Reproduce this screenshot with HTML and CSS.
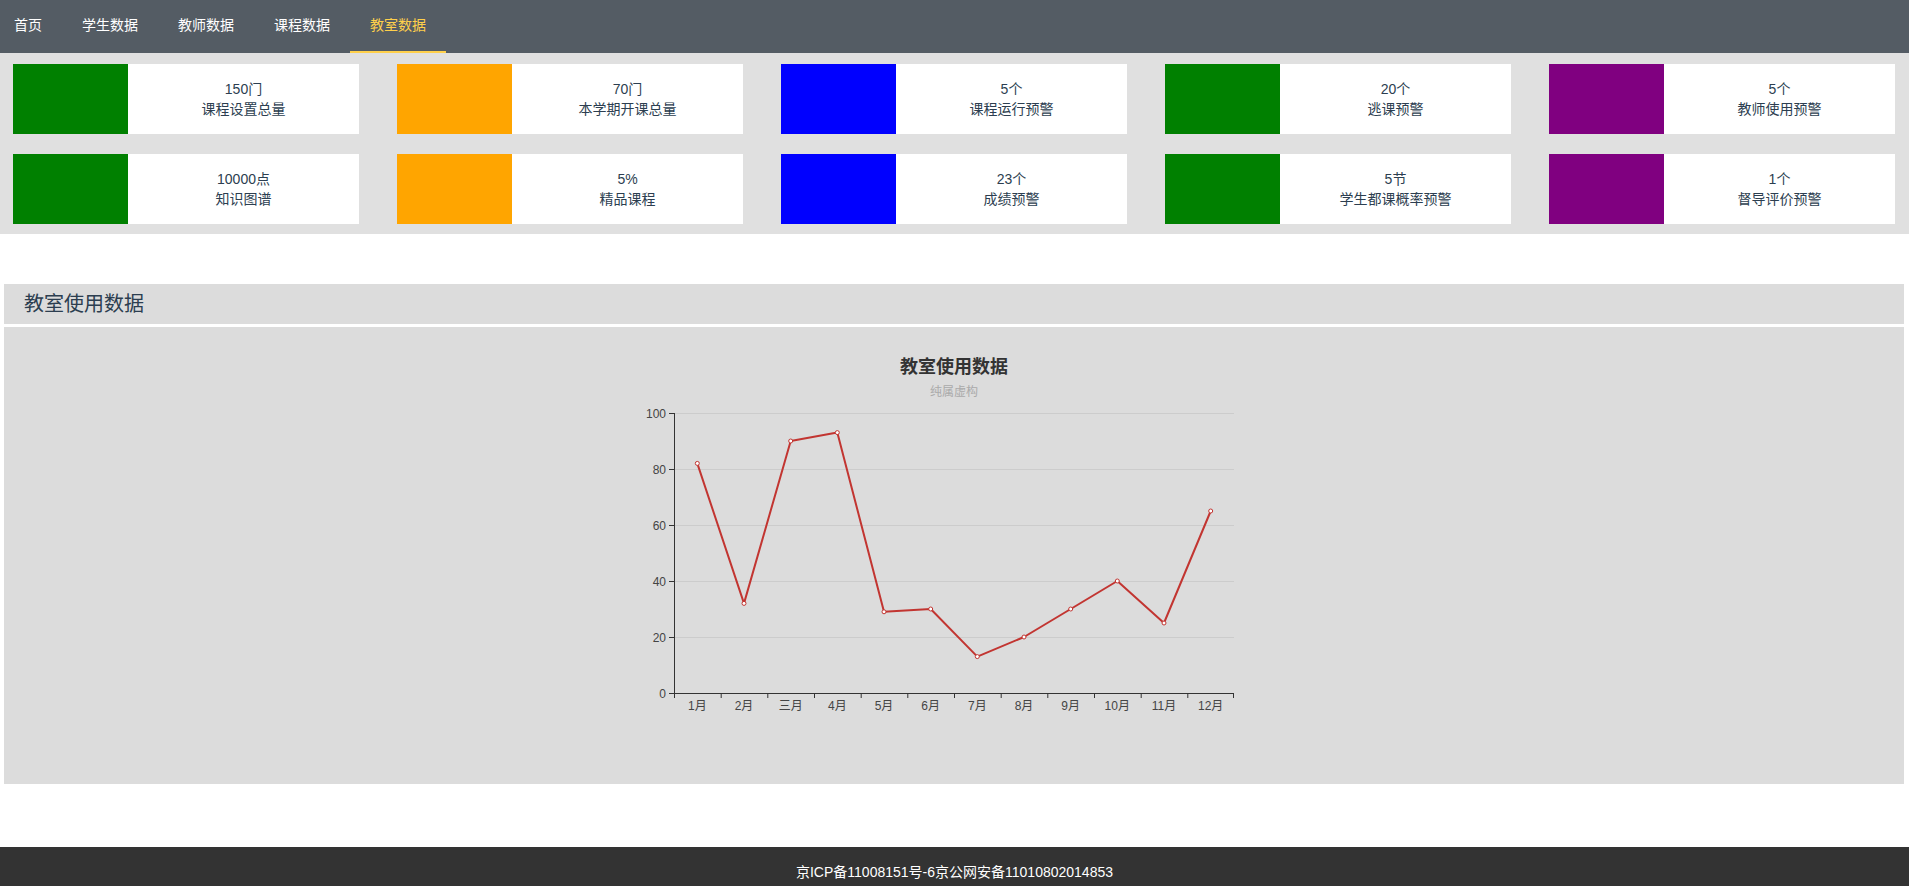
FILE: index.html
```html
<!DOCTYPE html>
<html lang="zh">
<head>
<meta charset="utf-8">
<title>教室数据</title>
<link rel="stylesheet" href="styles.css">
</head>
<body>
<nav class="nav">
  <ul class="nav-list">
    <li class="nav-item">首页</li>
    <li class="nav-item">学生数据</li>
    <li class="nav-item">教师数据</li>
    <li class="nav-item">课程数据</li>
    <li class="nav-item active">教室数据</li>
  </ul>
</nav>

<section class="stats">
  <div class="card"><div class="swatch green"></div><div class="card-text"><span>150门</span><span>课程设置总量</span></div></div>
  <div class="card"><div class="swatch orange"></div><div class="card-text"><span>70门</span><span>本学期开课总量</span></div></div>
  <div class="card"><div class="swatch blue"></div><div class="card-text"><span>5个</span><span>课程运行预警</span></div></div>
  <div class="card"><div class="swatch green"></div><div class="card-text"><span>20个</span><span>逃课预警</span></div></div>
  <div class="card"><div class="swatch purple"></div><div class="card-text"><span>5个</span><span>教师使用预警</span></div></div>
  <div class="card"><div class="swatch green"></div><div class="card-text"><span>10000点</span><span>知识图谱</span></div></div>
  <div class="card"><div class="swatch orange"></div><div class="card-text"><span>5%</span><span>精品课程</span></div></div>
  <div class="card"><div class="swatch blue"></div><div class="card-text"><span>23个</span><span>成绩预警</span></div></div>
  <div class="card"><div class="swatch green"></div><div class="card-text"><span>5节</span><span>学生都课概率预警</span></div></div>
  <div class="card"><div class="swatch purple"></div><div class="card-text"><span>1个</span><span>督导评价预警</span></div></div>
</section>

<section class="panel">
  <h2 class="panel-title">教室使用数据</h2>
  <div class="chart-box">
    <svg class="chart" width="700" height="400" viewBox="0 0 700 400">
      <text class="c-title" x="350" y="13.5">教室使用数据</text>
      <text class="c-sub" x="350" y="38.5">纯属虚构</text>
      <g class="split">
        <line x1="70" y1="60.5" x2="630" y2="60.5"/>
        <line x1="70" y1="116.5" x2="630" y2="116.5"/>
        <line x1="70" y1="172.5" x2="630" y2="172.5"/>
        <line x1="70" y1="228.5" x2="630" y2="228.5"/>
        <line x1="70" y1="284.5" x2="630" y2="284.5"/>
      </g>
      <g class="axis">
        <line x1="70.5" y1="60" x2="70.5" y2="340.5"/>
        <line x1="70" y1="340.5" x2="630" y2="340.5"/>
        <line x1="65" y1="60.5" x2="70" y2="60.5"/>
        <line x1="65" y1="116.5" x2="70" y2="116.5"/>
        <line x1="65" y1="172.5" x2="70" y2="172.5"/>
        <line x1="65" y1="228.5" x2="70" y2="228.5"/>
        <line x1="65" y1="284.5" x2="70" y2="284.5"/>
        <line x1="65" y1="340.5" x2="70" y2="340.5"/>
        <line x1="70.5" y1="340" x2="70.5" y2="345"/>
        <line x1="117.2" y1="340" x2="117.2" y2="345"/>
        <line x1="163.8" y1="340" x2="163.8" y2="345"/>
        <line x1="210.5" y1="340" x2="210.5" y2="345"/>
        <line x1="257.2" y1="340" x2="257.2" y2="345"/>
        <line x1="303.8" y1="340" x2="303.8" y2="345"/>
        <line x1="350.5" y1="340" x2="350.5" y2="345"/>
        <line x1="397.2" y1="340" x2="397.2" y2="345"/>
        <line x1="443.8" y1="340" x2="443.8" y2="345"/>
        <line x1="490.5" y1="340" x2="490.5" y2="345"/>
        <line x1="537.2" y1="340" x2="537.2" y2="345"/>
        <line x1="583.8" y1="340" x2="583.8" y2="345"/>
        <line x1="629.5" y1="340" x2="629.5" y2="345"/>
      </g>
      <g class="ylab">
        <text x="62" y="60.5">100</text>
        <text x="62" y="116.5">80</text>
        <text x="62" y="172.5">60</text>
        <text x="62" y="228.5">40</text>
        <text x="62" y="284.5">20</text>
        <text x="62" y="340.5">0</text>
      </g>
      <g class="xlab">
        <text x="93.3" y="353">1月</text>
        <text x="140" y="353">2月</text>
        <text x="186.7" y="353">三月</text>
        <text x="233.3" y="353">4月</text>
        <text x="280" y="353">5月</text>
        <text x="326.7" y="353">6月</text>
        <text x="373.3" y="353">7月</text>
        <text x="420" y="353">8月</text>
        <text x="466.7" y="353">9月</text>
        <text x="513.3" y="353">10月</text>
        <text x="560" y="353">11月</text>
        <text x="606.7" y="353">12月</text>
      </g>
      <polyline class="series" points="93.3,110.4 140,250.4 186.7,88 233.3,79.6 280,258.8 326.7,256 373.3,303.6 420,284 466.7,256 513.3,228 560,270 606.7,158"/>
      <g class="dots">
        <circle cx="93.3" cy="110.4" r="2"/>
        <circle cx="140" cy="250.4" r="2"/>
        <circle cx="186.7" cy="88" r="2"/>
        <circle cx="233.3" cy="79.6" r="2"/>
        <circle cx="280" cy="258.8" r="2"/>
        <circle cx="326.7" cy="256" r="2"/>
        <circle cx="373.3" cy="303.6" r="2"/>
        <circle cx="420" cy="284" r="2"/>
        <circle cx="466.7" cy="256" r="2"/>
        <circle cx="513.3" cy="228" r="2"/>
        <circle cx="560" cy="270" r="2"/>
        <circle cx="606.7" cy="158" r="2"/>
      </g>
    </svg>
  </div>
</section>

<footer class="footer">京ICP备11008151号-6京公网安备11010802014853</footer>
</body>
</html>
```

FILE: styles.css
```css
html, body {
  margin: 0;
  padding: 0;
}
body {
  font-family: "Liberation Sans", "Noto Sans CJK SC", sans-serif;
  color: #2c3e50;
  background: #fff;
  overflow: hidden;
}

.nav {
  background: #545c64;
  height: 53px;
}
.nav-list {
  list-style: none;
  margin: 0 0 0 -6px;
  padding: 0;
  display: flex;
}
.nav-item {
  padding: 0 20px;
  height: 51px;
  line-height: 51px;
  font-size: 14px;
  color: #fff;
  border-bottom: 2px solid transparent;
}
.nav-item.active {
  color: #ffd04b;
  border-bottom-color: #ffd04b;
}

.stats {
  background: #e0e0e0;
  display: grid;
  grid-template-columns: repeat(5, 346px);
  grid-auto-rows: 70px;
  column-gap: 38px;
  row-gap: 20px;
  padding: 11px 0 10px 13px;
}
.card {
  display: flex;
  background: #fff;
}
.swatch {
  width: 115px;
  flex: none;
}
.green { background: #008000; }
.orange { background: #ffa500; }
.blue { background: #0000ff; }
.purple { background: #800080; }
.card-text {
  flex: 1;
  display: flex;
  flex-direction: column;
  justify-content: center;
  align-items: center;
  font-size: 14px;
  line-height: 20px;
  color: #2c3e50;
}

.panel {
  margin: 50px 5px 0 4px;
}
.panel-title {
  margin: 0;
  height: 40px;
  line-height: 40px;
  background: #dcdcdc;
  padding-left: 20px;
  font-size: 20px;
  font-weight: normal;
  color: #2c3e50;
}
.chart-box {
  margin-top: 3px;
  background: #dcdcdc;
  padding: 26px 0 31px;
  display: flex;
  justify-content: center;
}
.chart {
  display: block;
  font-family: "Liberation Sans", "Noto Sans CJK SC", sans-serif;
}
.c-title {
  font-size: 18px;
  font-weight: bold;
  fill: #333;
  text-anchor: middle;
  dominant-baseline: central;
}
.c-sub {
  font-size: 12px;
  fill: #aaa;
  text-anchor: middle;
  dominant-baseline: central;
}
.split line {
  stroke: #cccccc;
  stroke-width: 1;
}
.axis line {
  stroke: #333;
  stroke-width: 1;
}
.ylab text {
  font-size: 12px;
  fill: #444;
  text-anchor: end;
  dominant-baseline: central;
}
.xlab text {
  font-size: 12px;
  fill: #444;
  text-anchor: middle;
  dominant-baseline: central;
}
.series {
  fill: none;
  stroke: #c23531;
  stroke-width: 2;
  stroke-linejoin: round;
}
.dots circle {
  fill: #fff;
  stroke: #c23531;
  stroke-width: 1;
}

.footer {
  margin-top: 63px;
  background: #333;
  color: #fff;
  font-size: 14px;
  line-height: 14px;
  height: 39px;
  box-sizing: border-box;
  padding-top: 18px;
  text-align: center;
}
```
